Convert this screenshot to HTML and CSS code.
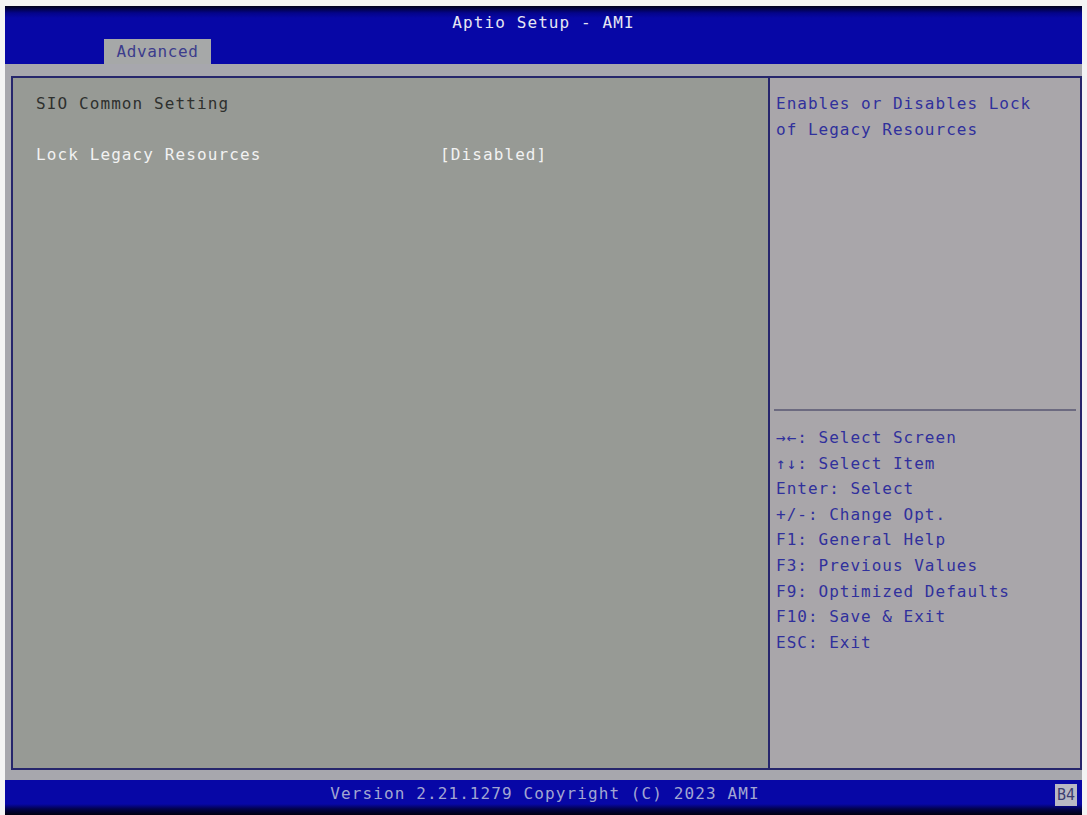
FILE: index.html
```html
<!DOCTYPE html>
<html lang="en">
<head>
    <meta charset="UTF-8">
    <meta name="viewport" content="width=device-width, initial-scale=1.0">
    <title>Aptio Setup - AMI</title>
    <link rel="stylesheet" href="styles.css">
</head>
<body>
    <div class="screen">
        <div class="top-bar">
            <div class="title">Aptio Setup - AMI</div>
            <div class="tabs">
                <div class="tab active">Advanced</div>
            </div>
        </div>

        <div class="main">
            <div class="settings">
                <div class="line heading">SIO Common Setting</div>
                <div class="line blank"></div>
                <div class="line item">
                    <span class="item-name">Lock Legacy Resources</span>
                    <span class="item-value">[Disabled]</span>
                </div>
            </div>

            <div class="side">
                <div class="help">
                    <div class="line">Enables or Disables Lock</div>
                    <div class="line">of Legacy Resources</div>
                </div>
                <div class="divider"></div>
                <div class="keys">
                    <div class="line">&rarr;&larr;: Select Screen</div>
                    <div class="line">&uarr;&darr;: Select Item</div>
                    <div class="line">Enter: Select</div>
                    <div class="line">+/-: Change Opt.</div>
                    <div class="line">F1: General Help</div>
                    <div class="line">F3: Previous Values</div>
                    <div class="line">F9: Optimized Defaults</div>
                    <div class="line">F10: Save &amp; Exit</div>
                    <div class="line">ESC: Exit</div>
                </div>
            </div>
        </div>

        <div class="bottom-bar">
            <div class="version">Version 2.21.1279 Copyright (C) 2023 AMI</div>
            <div class="code">B4</div>
        </div>
    </div>
</body>
</html>
```

FILE: styles.css
```css
* {
    margin: 0;
    padding: 0;
    box-sizing: border-box;
}

body {
    background: #f4f4f4;
    font-family: "DejaVu Sans Mono", "Liberation Mono", monospace;
    font-size: 16px;
    letter-spacing: 1.1px;
    overflow: hidden;
}

.screen {
    margin: 6px 5px 0 5px;
    height: 809px;
    display: flex;
    flex-direction: column;
    background: #a7a7ad;
}

/* header */
.top-bar {
    height: 58px;
    display: flex;
    flex-direction: column;
    background: linear-gradient(to bottom, #00001a 0, #04048a 7px, #0707a6 12px, #0707a6 100%);
}

.title {
    text-align: center;
    color: #e6e6f2;
    line-height: 20px;
    padding-top: 7px;
}

.tabs {
    margin-top: auto;
    display: flex;
    padding-left: 99px;
}

.tab {
    width: 107px;
    height: 25px;
    line-height: 26px;
    text-align: center;
    color: #3c3c8c;
    letter-spacing: 0.6px;
}

.tab.active {
    background: #a6a8a8;
}

/* panels */
.main {
    flex: 1;
    display: flex;
    padding: 12px 0 10px 6px;
}

.line {
    height: 25.6px;
    line-height: 25.6px;
    white-space: pre;
}

.settings {
    flex: 1;
    background: #979a95;
    border: 2px solid #26266c;
    border-right: none;
    padding: 13px 0 0 23px;
}

.heading {
    color: #2e302e;
}

.item {
    display: flex;
    color: #f2f2f2;
}

.item-name {
    width: 404px;
}

.side {
    width: 314px;
    display: flex;
    flex-direction: column;
    background: #a9a6aa;
    border: 2px solid #26266c;
    color: #30309c;
}

.help {
    height: 331px;
    padding: 13px 0 0 6px;
    letter-spacing: 1px;
}

.divider {
    height: 2px;
    margin: 0 4px;
    background: #6c6a80;
}

.keys {
    padding: 14px 0 0 6px;
    letter-spacing: 1px;
}

/* footer */
.bottom-bar {
    height: 35px;
    display: flex;
    align-items: flex-start;
    background: linear-gradient(to bottom, #0707a6 0, #0707a6 24px, #02024a 29px, #000010 100%);
}

.version {
    flex: 1;
    text-align: center;
    color: #a2a6d2;
    line-height: 28px;
    padding-left: 30px;
}

.code {
    margin: 4px 5px 0 0;
    width: 22px;
    height: 22px;
    line-height: 22px;
    text-align: center;
    letter-spacing: 0;
    font-size: 15px;
    background: #b8b8c4;
    color: #3c3c70;
}
```
